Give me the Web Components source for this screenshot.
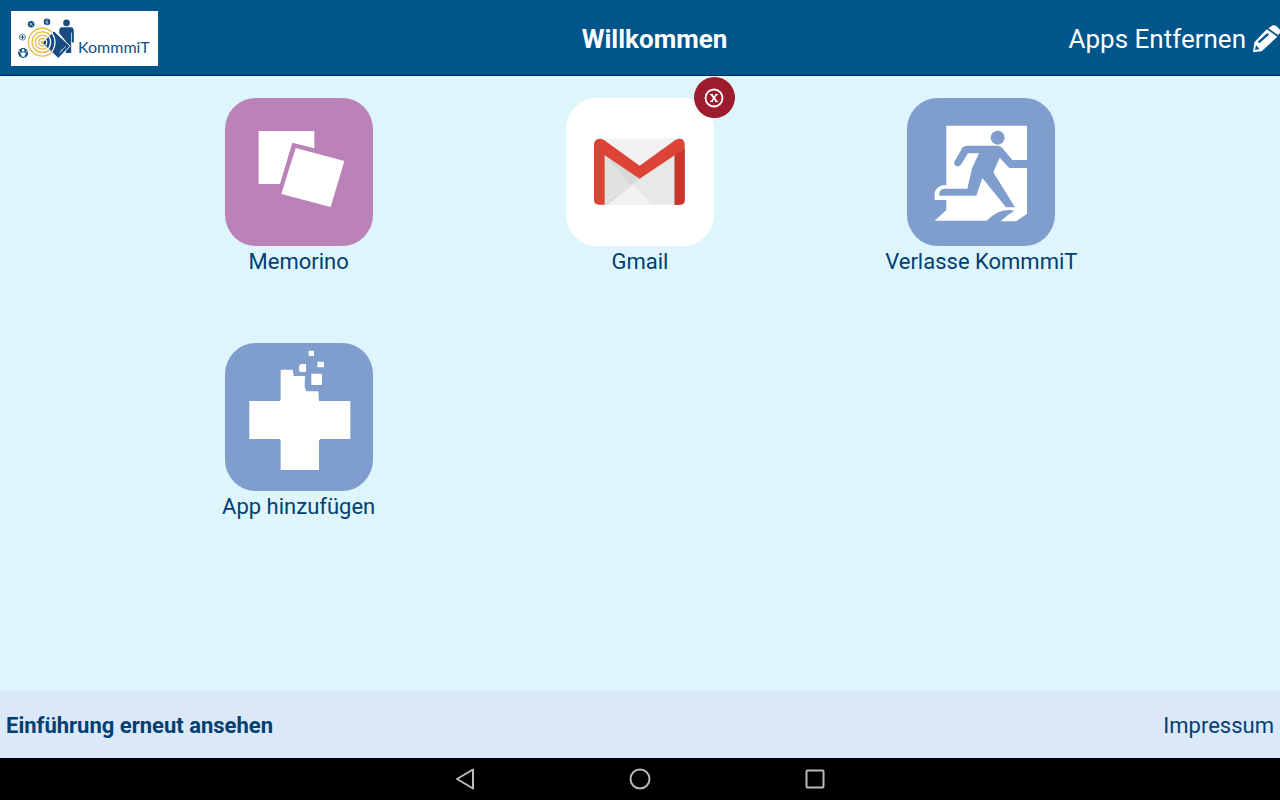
<!DOCTYPE html>
<html lang="de">
<head>
<meta charset="utf-8">
<meta name="viewport" content="width=device-width, initial-scale=1">
<title>KommmiT</title>
<style>
    body {
        margin: 0;
        font-family: Roboto, sans-serif;
        --blue: #00558b;
        --text: #003f73;
        --tile-blue: #7f9ecd;
    }
</style>
</head>
<body>
<app-screen>
    <app-header slot="header" heading="Willkommen">
        <app-logo slot="logo"></app-logo>
    </app-header>

    <app-tile label="Memorino" color="#bb82b8">
        <svg viewBox="29 24 444 444" fill="#fff">
            <path d="M130 123H297V175L231 158L194 282H130Z"/>
            <path d="M241 174L387 213L346 351L198 312Z"/>
        </svg>
    </app-tile>

    <app-tile label="Gmail" color="#fff" removable>
        <svg viewBox="33 84 444 444">
            <path fill="#e8e8e8" d="M132 206H375V404H132Z"/>
            <path fill="#f2f2f2" d="M140 206H368L254 290Z"/>
            <path fill="#d8d8d8" d="M149 256L254 326L228 346L158 403H149Z"/>
            <path fill="#e2e2e2" d="M149 256L228 346L149 403Z"/>
            <path fill="#f2f2f2" d="M158 404L235 345L290 404Z"/>
            <path fill="#db4437" d="M117 222V390Q117 404 132 404H149V256L254 326L359 256V404H375Q389 404 389 390V222Q388 206 373 206Q366 206 360 211L254 287L148 211Q142 206 134 206Q118 207 117 222Z"/>
            <path fill="#c5372c" d="M359 256L389 236V390Q389 404 375 404H359Z"/>
        </svg>
    </app-tile>

    <app-tile label="Verlasse KommmiT">
        <svg viewBox="81 24 444 444">
            <path fill="#fff" d="M199 107H441V372L408 394H362L380 378L403 362Q375 356 350 369Q334 378 320 392H164L199 360V330H164V308Q170 290 187 286H199Z"/>
            <g fill="var(--tile-blue)">
                <circle cx="353" cy="143" r="21"/>
                <path d="M260 167H354Q362 168 367 174L397 210H441V234H388L359 203L340 247L405 352H378L307 264L289 317H178V308Q181 297 192 296H262L276 235L297 190H264L244 223Q239 230 230 229Q220 224 223 215L247 173Q251 168 260 167Z"/>
            </g>
        </svg>
    </app-tile>

    <app-tile label="App hinzufügen">
        <svg viewBox="29 23 444 444" fill="#fff">
            <path d="M196 103H232L235 122H269L268 156L273 168H309L311 197H405V311H315L311 316V404H196V316L192 311H102V197H192L196 193Z"/>
            <rect x="280" y="46" width="16" height="16" rx="3"/>
            <rect x="306" y="79" width="20" height="17" rx="2"/>
            <path d="M256 86H272V110H254L251 104V93Z"/>
            <rect x="288" y="115" width="32" height="34" rx="2"/>
        </svg>
    </app-tile>

    <app-footer slot="footer"></app-footer>
    <system-bar slot="system"></system-bar>
</app-screen>

<script>
class AppScreen extends HTMLElement {
    constructor() {
        super();
        this.attachShadow({mode: "open"}).innerHTML = `
            <style>
                :host {
                    display: flex;
                    flex-direction: column;
                    min-height: 100vh;
                    background: #def5fc;
                }

                main {
                    flex: 1;
                    display: grid;
                    grid-template-columns: repeat(3, 1fr);
                    grid-auto-rows: 245px;
                    padding: 22px 10% 0;
                }
            </style>
            <slot name="header"></slot>
            <main><slot></slot></main>
            <slot name="footer"></slot>
            <slot name="system"></slot>
        `;
    }
}

class AppHeader extends HTMLElement {
    connectedCallback() {
        this.attachShadow({mode: "open"}).innerHTML = `
            <style>
                :host {
                    display: block;
                    background: var(--blue);
                    border-bottom: 1px solid #00235c;
                    color: #fff;
                }

                header {
                    display: grid;
                    grid-template-columns: 1fr auto 1fr;
                    align-items: center;
                    height: 75px;
                    padding: 2px 0 0 11px;
                    box-sizing: border-box;
                }

                h1 {
                    margin: 0;
                    padding-left: 18px;
                    font-size: 26px;
                    line-height: 32px;
                    font-weight: 700;
                }

                button {
                    justify-self: end;
                    display: flex;
                    align-items: center;
                    gap: 7px;
                    padding: 0;
                    border: 0;
                    background: none;
                    color: inherit;
                    font: inherit;
                    font-size: 26px;
                    line-height: 32px;
                    cursor: pointer;
                }

                svg {
                    width: 27px;
                    height: 28px;
                }
            </style>
            <header>
                <slot name="logo"></slot>
                <h1>${this.getAttribute('heading')}</h1>
                <button type="button">
                    Apps Entfernen
                    <svg viewBox="609 70 81 84" fill="#fff" aria-hidden="true">
                        <path d="M662 75Q670 68 679 73L690 84V94L684 100L655 80Z"/>
                        <path fill-rule="evenodd" d="M650 83L682 105L635 149L609 152L613 122ZM652 94L623 120L628 125L657 99ZM618 131L615 145L629 142Z"/>
                    </svg>
                </button>
            </header>
        `;
    }
}

class AppLogo extends HTMLElement {
    constructor() {
        super();
        this.attachShadow({mode: "open"}).innerHTML = `
            <style>
                :host {
                    justify-self: start;
                    display: flex;
                    align-items: center;
                    width: 147px;
                    height: 55px;
                    background: #fff;
                    color: #164c82;
                }

                svg {
                    flex: none;
                    width: 67px;
                    height: 55px;
                }

                span {
                    padding-top: 17px;
                    font: 16px/20px Lato, sans-serif;
                }
            </style>
            <svg viewBox="33 33 201 166" fill="none" aria-hidden="true">
                <g fill="#164c82">
                    <circle cx="200" cy="69" r="10"/>
                    <path d="M184 82H215Q222 84 222 94V126Q219 132 216 126V98H214V160H198V124L178 100V90Q179 84 184 82Z"/>
                </g>
                <g stroke="#e8b94a" stroke-width="4">
                    <circle cx="127" cy="127" r="42"/>
                    <circle cx="127" cy="127" r="31"/>
                    <circle cx="127" cy="127" r="21"/>
                    <circle cx="127" cy="127" r="11"/>
                </g>
                <path fill="#164c82" stroke="#fff" stroke-width="3" d="M162 93L211 139L175 176L126 129Z"/>
                <circle cx="127" cy="127" r="4" fill="#e8b94a"/>
                <g stroke="#fff" stroke-width="4">
                    <path d="M136 118Q144 127 137 137"/>
                    <path d="M146 109Q159 128 145 147"/>
                    <path d="M156 99Q175 127 156 156"/>
                </g>
                <path stroke="#fff" stroke-width="2" d="M179 160L198 139"/>
                <circle cx="185" cy="151" r="2" fill="#fff"/>
                <g fill="#164c82">
                    <circle cx="93" cy="73" r="10"/>
                    <circle cx="141" cy="66" r="10"/>
                    <circle cx="69" cy="160" r="15"/>
                </g>
                <circle cx="67" cy="112" r="9" stroke="#164c82" stroke-width="2"/>
                <path stroke="#164c82" stroke-width="3" d="M61 112H73M67 106V118"/>
                <path stroke="#fff" stroke-width="2" d="M88 68L98 78M98 68L88 78M144 58L137 67H144L138 75"/>
                <g fill="#fff">
                    <circle cx="69" cy="152" r="4"/>
                    <path d="M61 158H77V164H74V171H64V164H61Z"/>
                    <circle cx="58" cy="155" r="2"/>
                    <circle cx="80" cy="155" r="2"/>
                </g>
            </svg>
            <span>KommmiT</span>
        `;
    }
}

class AppTile extends HTMLElement {
    connectedCallback() {
        const label = this.getAttribute('label');
        const color = this.getAttribute('color') || 'var(--tile-blue)';
        const remove = this.hasAttribute('removable') ? `
            <button class="remove" type="button" aria-label="${label} entfernen">
                <svg viewBox="0 0 20 20" fill="none" stroke="#fff" aria-hidden="true">
                    <circle cx="10" cy="10" r="8.500" stroke-width="1.800"/>
                    <path stroke-width="2" d="M7.500 6.500L12.500 13.500"/>
                    <path stroke-width="1.400" d="M12.500 6.500L7.500 13.500"/>
                    <path stroke-width="1" d="M6 6.500H9M11 6.500H14M6 13.500H9M11 13.500H14"/>
                </svg>
            </button>` : '';

        this.attachShadow({mode: "open"}).innerHTML = `
            <style>
                :host {
                    display: block;
                    justify-self: center;
                    align-self: start;
                    position: relative;
                }

                .tile {
                    display: flex;
                    flex-direction: column;
                    align-items: center;
                    padding: 0;
                    border: 0;
                    background: none;
                    color: var(--text);
                    font: inherit;
                    font-size: 22px;
                    line-height: 32px;
                    cursor: pointer;
                }

                .icon {
                    width: 148px;
                    height: 148px;
                    border-radius: 31px;
                    background: ${color};
                }

                ::slotted(svg) {
                    display: block;
                    width: 100%;
                    height: 100%;
                }

                .remove {
                    position: absolute;
                    top: -21px;
                    right: -21px;
                    display: grid;
                    place-items: center;
                    width: 41px;
                    height: 41px;
                    padding: 0;
                    border: 0;
                    border-radius: 50%;
                    background: #9c1c2d;
                    cursor: pointer;
                }

                .remove svg {
                    width: 20px;
                    height: 20px;
                }
            </style>
            <button class="tile" type="button">
                <span class="icon"><slot></slot></span>
                <span>${label}</span>
            </button>
            ${remove}
        `;
    }
}

class AppFooter extends HTMLElement {
    constructor() {
        super();
        this.attachShadow({mode: "open"}).innerHTML = `
            <style>
                :host {
                    display: block;
                    background: #dae8f8;
                }

                footer {
                    display: flex;
                    justify-content: space-between;
                    align-items: center;
                    height: 68px;
                    padding: 4px 6px 0;
                    box-sizing: border-box;
                    font-size: 22px;
                    line-height: 32px;
                }

                a {
                    color: var(--text);
                    text-decoration: none;
                }

                .intro {
                    font-weight: 700;
                }
            </style>
            <footer>
                <a class="intro" href="#intro">Einführung erneut ansehen</a>
                <a href="#impressum">Impressum</a>
            </footer>
        `;
    }
}

class SystemBar extends HTMLElement {
    constructor() {
        super();
        this.attachShadow({mode: "open"}).innerHTML = `
            <style>
                :host {
                    display: block;
                    background: #000;
                }

                nav {
                    display: flex;
                    justify-content: center;
                    align-items: center;
                    gap: 151px;
                    height: 42px;
                }

                button {
                    display: flex;
                    padding: 0;
                    border: 0;
                    background: none;
                    cursor: pointer;
                }

                svg {
                    width: 24px;
                    height: 24px;
                    fill: none;
                    stroke: #bababa;
                    stroke-width: 2;
                    stroke-linejoin: round;
                }
            </style>
            <nav>
                <button type="button" aria-label="Zurück">
                    <svg viewBox="0 0 24 24"><path d="M4 12L20 2.500V21.500Z"/></svg>
                </button>
                <button type="button" aria-label="Startseite">
                    <svg viewBox="0 0 24 24"><circle cx="12" cy="12" r="9.500"/></svg>
                </button>
                <button type="button" aria-label="Übersicht">
                    <svg viewBox="0 0 24 24"><rect x="3.500" y="3.500" width="17" height="17" rx="1"/></svg>
                </button>
            </nav>
        `;
    }
}

customElements.define('app-screen', AppScreen);
customElements.define('app-header', AppHeader);
customElements.define('app-logo', AppLogo);
customElements.define('app-tile', AppTile);
customElements.define('app-footer', AppFooter);
customElements.define('system-bar', SystemBar);
</script>
</body>
</html>
